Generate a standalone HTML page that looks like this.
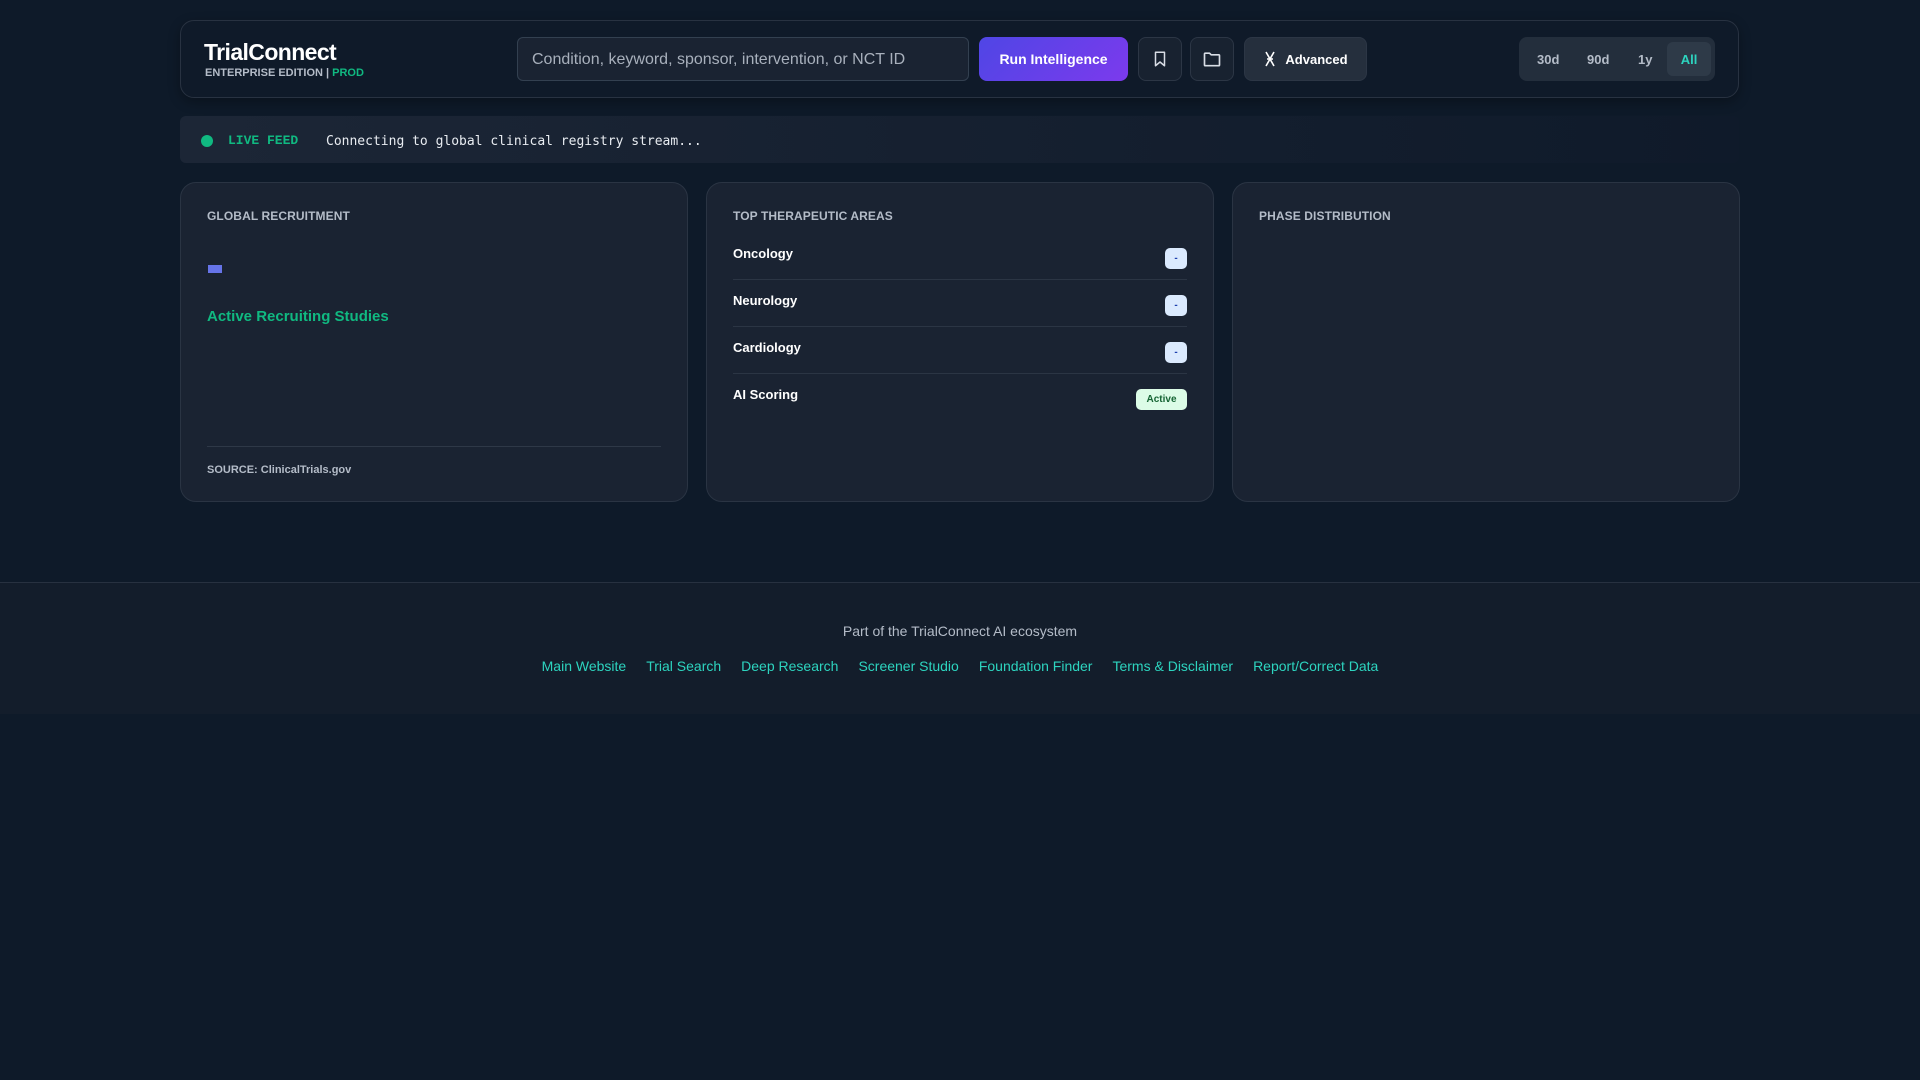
<!DOCTYPE html>
<html><head><meta charset="utf-8"><style>
*{box-sizing:border-box;margin:0;padding:0}
body{width:1920px;height:1080px;background:#0e1a29;font-family:"Liberation Sans",sans-serif;color:#fff;position:relative;overflow:hidden}
.abs{position:absolute}
.header{left:180px;top:20px;width:1559px;height:78px;border:1px solid #283241;border-radius:14px;background:#0f1a29;box-shadow:0 4px 12px rgba(0,0,0,.3)}
.btn{position:absolute;top:37px;height:44px;border-radius:8px;border:1px solid #2c3645;background:#182230;display:flex;align-items:center;justify-content:center}
.card{position:absolute;top:182px;height:320px;width:508px;background:#1a2332;border:1px solid #2a3443;border-radius:16px}
.ct{position:absolute;left:26px;top:26px;font-size:12px;font-weight:bold;color:#b4bcc8;letter-spacing:.1px}
.row{position:absolute;left:26px;right:26px;height:47px;border-bottom:1px solid #2b3544}
.row .n{position:absolute;left:0;top:13px;font-size:13px;font-weight:bold;color:#fff}
.row .b{position:absolute;right:0;top:15px;width:22px;height:21px;border-radius:5px;background:#dbeafe;color:#1e40af;font-size:10px;font-weight:bold;text-align:center;line-height:21px}
.ft a{color:#2dd4bf;text-decoration:none;margin:0 10px}
</style></head><body>
<div class="abs header"></div>
<div class="abs" style="left:204px;top:39px;font-size:23px;font-weight:bold;letter-spacing:-.6px">TrialConnect</div>
<div class="abs" style="left:205px;top:67px;font-size:11px;font-weight:bold;color:#b4bcc8">ENTERPRISE EDITION | <span style="color:#10b981">PROD</span></div>
<div class="abs" style="left:517px;top:37px;width:452px;height:44px;border:1px solid #334050;border-radius:6px;background:#1a2332;padding-left:14px;line-height:43px;font-size:16px;color:#a8b0bc">Condition, keyword, sponsor, intervention, or NCT ID</div>
<div class="btn" style="left:979px;width:149px;background:linear-gradient(135deg,#4f46e5,#7c3aed);border:none;font-size:14px;font-weight:bold">Run Intelligence</div>
<div class="btn" style="left:1138px;width:44px"><svg width="18" height="18" viewBox="0 0 24 24" fill="none" stroke="#d8dde5" stroke-width="2" stroke-linejoin="round"><path d="M6 3h12v18l-6-5-6 5z"/></svg></div>
<div class="btn" style="left:1190px;width:44px"><svg width="20" height="20" viewBox="0 0 24 24" fill="none" stroke="#d8dde5" stroke-width="2" stroke-linejoin="round"><path d="M3 6a1 1 0 0 1 1-1h5l2 2h9a1 1 0 0 1 1 1v11a1 1 0 0 1-1 1H4a1 1 0 0 1-1-1z"/></svg></div>
<div class="btn" style="left:1244px;width:123px;background:#252f3d;font-size:13px;font-weight:bold;gap:8px"><svg width="14" height="16" viewBox="0 0 14 16" fill="none" stroke="#fff" stroke-width="1.6"><path d="M3 1l8 14M11 1L3 15M4 8h6"/></svg>Advanced</div>
<div class="abs" style="left:1519px;top:37px;width:196px;height:44px;border-radius:8px;background:#232e3c"></div>
<div class="abs" style="left:1537px;top:52px;font-size:13px;font-weight:bold;color:#b4bcc8">30d</div>
<div class="abs" style="left:1587px;top:52px;font-size:13px;font-weight:bold;color:#b4bcc8">90d</div>
<div class="abs" style="left:1638px;top:52px;font-size:13px;font-weight:bold;color:#b4bcc8">1y</div>
<div class="abs" style="left:1667px;top:42px;width:44px;height:34px;border-radius:6px;background:#2e3a48;color:#2dd4bf;font-size:13px;font-weight:bold;text-align:center;line-height:36px">All</div>

<div class="abs" style="left:180px;top:116px;width:1559px;height:47px;border-radius:6px;background:linear-gradient(90deg,#1c2636,#0f1a2a)"></div>
<div class="abs" style="left:201px;top:135px;width:12px;height:12px;border-radius:50%;background:#10b981"></div>
<div class="abs" style="left:228px;top:133px;font-family:'Liberation Mono',monospace;font-size:13px;font-weight:bold;color:#10b981">LIVE FEED</div>
<div class="abs" style="left:326px;top:134px;font-family:'DejaVu Sans Mono',monospace;font-size:13px;color:#e8ecf1">Connecting to global clinical registry stream...</div>

<div class="card" style="left:180px">
<div class="ct">GLOBAL RECRUITMENT</div>
<div class="abs" style="left:27px;top:82px;width:14px;height:8px;background:#6674e8"></div>
<div class="abs" style="left:26px;top:125px;font-size:15px;font-weight:bold;color:#10b981">Active Recruiting Studies</div>
<div class="abs" style="left:26px;right:26px;top:263px;border-top:1px solid #2e3847"></div>
<div class="abs" style="left:26px;top:281px;font-size:11px;font-weight:bold;color:#b4bcc8">SOURCE: ClinicalTrials.gov</div>
</div>
<div class="card" style="left:706px">
<div class="ct">TOP THERAPEUTIC AREAS</div>
<div class="row" style="top:50px"><div class="n">Oncology</div><div class="b">-</div></div>
<div class="row" style="top:97px"><div class="n">Neurology</div><div class="b">-</div></div>
<div class="row" style="top:144px"><div class="n">Cardiology</div><div class="b">-</div></div>
<div class="row" style="top:191px;border:none"><div class="n">AI Scoring</div><div class="b" style="width:51px;background:#dcfce7;color:#166534">Active</div></div>
</div>
<div class="card" style="left:1232px"><div class="ct">PHASE DISTRIBUTION</div></div>

<div class="abs ft" style="left:0;top:582px;width:1920px;height:132px;background:#131d2b;border-top:1px solid #273140;text-align:center">
<div style="margin-top:40px;font-size:14px;color:#b4bcc8">Part of the TrialConnect AI ecosystem</div>
<div style="margin-top:19px;font-size:14px"><a>Main Website</a><a>Trial Search</a><a>Deep Research</a><a>Screener Studio</a><a>Foundation Finder</a><a>Terms &amp; Disclaimer</a><a>Report/Correct Data</a></div>
</div>
</body></html>
